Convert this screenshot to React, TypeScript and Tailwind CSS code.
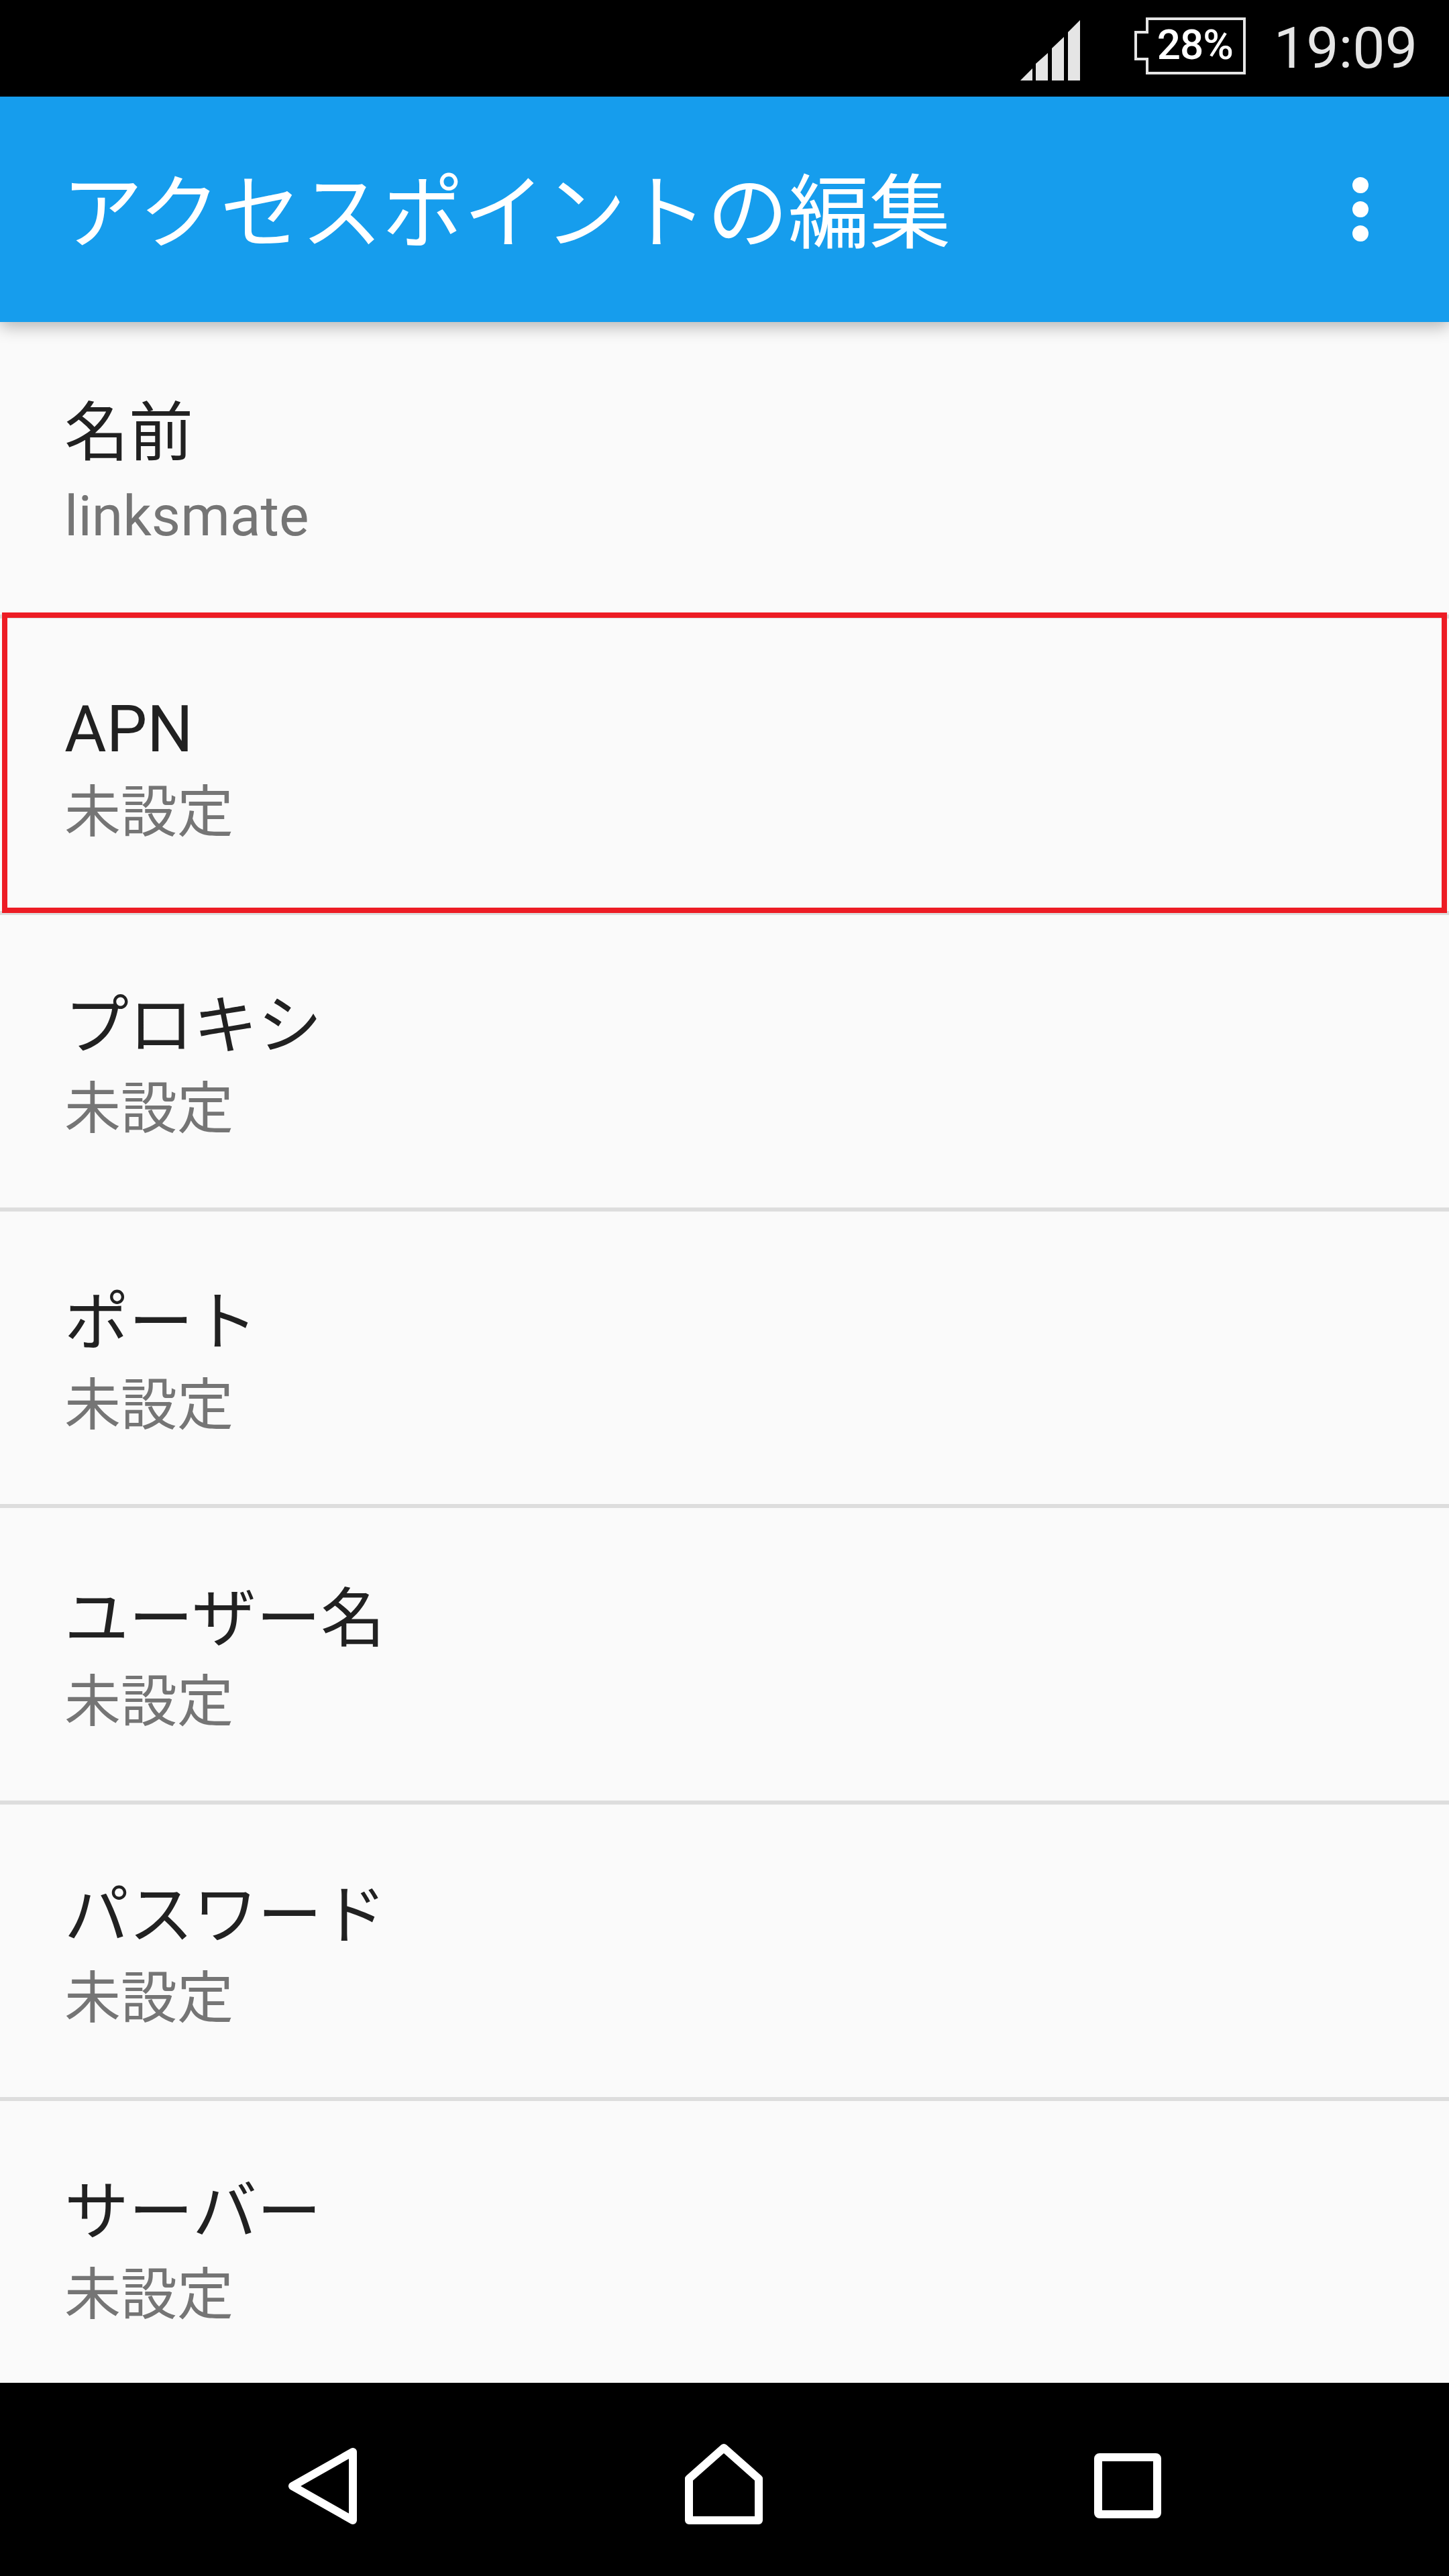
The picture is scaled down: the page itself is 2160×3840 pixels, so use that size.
const FONT = "font-['Roboto','Noto_Sans_CJK_JP',sans-serif]"

const ITEMS: { label: string; value: string; highlight?: boolean }[] = [
  { label: '名前', value: 'linksmate' },
  { label: 'APN', value: '未設定', highlight: true },
  { label: 'プロキシ', value: '未設定' },
  { label: 'ポート', value: '未設定' },
  { label: 'ユーザー名', value: '未設定' },
  { label: 'パスワード', value: '未設定' },
  { label: 'サーバー', value: '未設定' },
]

function SignalIcon() {
  return (
    <svg width="90" height="92" viewBox="0 0 90 92" fill="#e5e5e5">
      <polygon points="0,91 18,73 18,91" />
      <polygon points="23,91 23,66 41,50 41,91" />
      <polygon points="47,91 47,43 65,26 65,91" />
      <polygon points="71,91 71,19 89,1 89,91" />
    </svg>
  )
}

function BatteryIcon() {
  return (
    <div className="relative w-[166px] h-[86px]">
      <svg width="166" height="86" viewBox="0 0 166 86" fill="none" stroke="#e5e5e5" strokeWidth="4">
        <path d="M19 2H164V83H19V62H2V22H19Z" />
      </svg>
      <span className="absolute left-[34px] top-[6px] text-[62px] leading-[70px] font-medium text-white tracking-[-1px]">28%</span>
    </div>
  )
}

function BackIcon() {
  return (
    <svg width="144" height="144" viewBox="0 0 144 144" fill="none" stroke="white" strokeWidth="12" strokeLinejoin="round">
      <path d="M118 31V133L28 82Z" />
    </svg>
  )
}

function HomeIcon() {
  return (
    <svg width="144" height="144" viewBox="0 0 144 144" fill="none" stroke="white" strokeWidth="12" strokeLinejoin="round">
      <path d="M71 25L19 71V133H123V71Z" />
    </svg>
  )
}

function RecentsIcon() {
  return (
    <svg width="144" height="144" viewBox="0 0 144 144" fill="none" stroke="white" strokeWidth="12" strokeLinejoin="round">
      <rect x="29" y="39" width="88" height="85" rx="2" />
    </svg>
  )
}

export default function App() {
  return (
    <div className={`flex flex-col w-[2160px] h-[3840px] overflow-hidden bg-[#fafafa] ${FONT}`}>
      {/* Status bar */}
      <div className="flex items-center justify-end h-[144px] bg-black pr-[47px] shrink-0">
        <div className="mr-[80px] mt-[6px]"><SignalIcon /></div>
        <div className="mr-[42px] -mt-[6px]"><BatteryIcon /></div>
        <span className="text-[86px] leading-[100px] text-[#e5e5e5]">19:09</span>
      </div>

      {/* Toolbar */}
      <div className="relative z-10 flex items-center justify-between h-[336px] bg-[#169ded] pl-[92px] pr-[120px] shrink-0 shadow-[0_6px_24px_rgba(0,0,0,0.3)]">
        <h1 className="text-[121px] leading-[140px] font-normal text-white mt-[14px]">アクセスポイントの編集</h1>
        <div className="flex flex-col gap-[12px]">
          <span className="block w-[24px] h-[24px] rounded-full bg-white" />
          <span className="block w-[24px] h-[24px] rounded-full bg-white" />
          <span className="block w-[24px] h-[24px] rounded-full bg-white" />
        </div>
      </div>

      {/* Settings list */}
      <div className="flex-1 min-h-0 overflow-hidden">
        {ITEMS.map(({ label, value, highlight }) => (
          <div key={label} className="relative flex flex-col justify-center h-[442px] pl-[96px] pt-[13px] border-b-[6px] border-[#dddddd]">
            <div className="text-[96px] leading-[124px] text-[#212121]">{label}</div>
            <div className="text-[84px] leading-[112px] mt-[7px] text-[#757575]">{value}</div>
            {highlight && (
              <div className="absolute left-[3px] right-[3px] top-[-9px] bottom-[-3px] border-[8px] border-[#ed1c24]" />
            )}
          </div>
        ))}
      </div>

      {/* Navigation bar */}
      <div className="relative z-10 flex items-center justify-center h-[288px] bg-black shrink-0">
        <div className="flex items-center justify-center w-[600px]"><BackIcon /></div>
        <div className="flex items-center justify-center w-[600px]"><HomeIcon /></div>
        <div className="flex items-center justify-center w-[600px]"><RecentsIcon /></div>
      </div>
    </div>
  )
}
